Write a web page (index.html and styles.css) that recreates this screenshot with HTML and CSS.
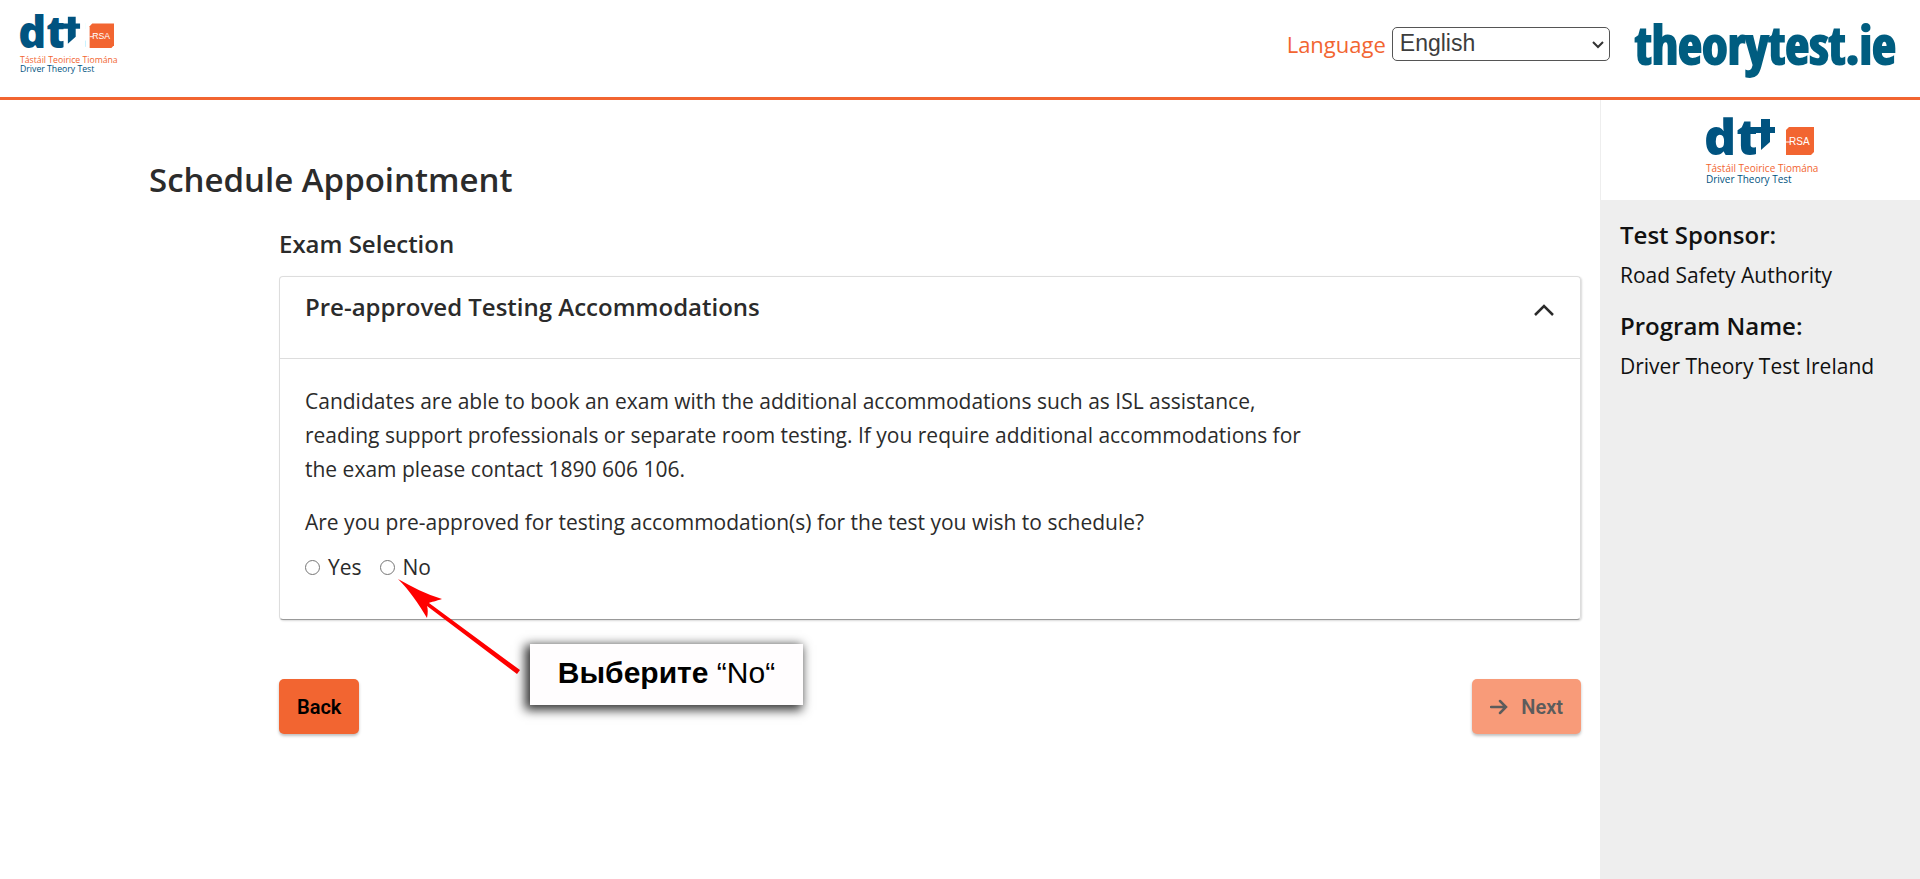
FILE: index.html
```html
<!DOCTYPE html>
<html lang="en">
<head>
<meta charset="utf-8">
<title>Schedule Appointment</title>
<link rel="stylesheet" href="styles.css">
</head>
<body>
<svg class="defs" aria-hidden="true">
  <symbol id="dtt-logo" viewBox="0 0 108 70" overflow="visible">
    <text class="logo-dtt" x="-2" y="39">dtt</text>
    <path fill="#fff" d="M50 0h25v41H50z"/>
    <path fill="#005380" d="M49 11h6V3h9v8h5v6h-5v9l-9 8V17h-6z"/>
    <path fill="#f26531" d="M83 11h25v25l-3 3H80V14z"/>
    <path stroke="#fff" stroke-width="1" d="M80 26h4"/>
    <text class="logo-rsa" x="83" y="29">RSA</text>
    <text class="logo-irish" x="0" y="56">Tástáil Teoirice Tiomána</text>
    <text class="logo-english" x="0" y="67">Driver Theory Test</text>
  </symbol>
</svg>
<header class="topbar">
  <svg class="logo-small" role="img" aria-label="Driver Theory Test"><use href="#dtt-logo"/></svg>
  <div class="topbar-end">
    <label class="language-label" for="language">Language</label>
    <div class="select-wrap">
      <select id="language" class="language"><option>English</option><option>Gaeilge</option></select>
      <svg class="select-arrow" viewBox="0 0 12 8"><path d="M1 1l5 5 5-5"/></svg>
    </div>
    <a class="wordmark" href="#">theorytest.ie</a>
  </div>
</header>
<div class="page">
  <main class="main">
    <h1 class="title">Schedule Appointment</h1>
    <div class="content">
      <h2 class="subtitle">Exam Selection</h2>
      <section class="card">
        <div class="card-head">
          <h3 class="card-title">Pre-approved Testing Accommodations</h3>
          <button class="toggle" type="button" aria-label="Collapse"><svg viewBox="0 0 20 12"><path d="M1 11l9-9 9 9"/></svg></button>
        </div>
        <div class="card-body">
          <p class="text">Candidates are able to book an exam with the additional accommodations such as ISL assistance, reading support professionals or separate room testing. If you require additional accommodations for the exam please contact 1890 606 106.</p>
          <p class="text">Are you pre-approved for testing accommodation(s) for the test you wish to schedule?</p>
          <div class="options">
            <label class="option"><input class="radio" type="radio" name="approved">Yes</label>
            <label class="option"><input class="radio" type="radio" name="approved">No</label>
          </div>
        </div>
        <div class="annotation">
          <svg class="arrow" viewBox="0 0 122 96"><path d="M0 0C14 8 28 15 44 20C38 22 33 23 31 24L122 91L119 95L29 27C30 30 30 34 29 39C20 24 12 12 0 0z"/></svg>
          <div class="callout"><strong>Выберите</strong> “No“</div>
        </div>
      </section>
      <div class="actions">
        <button class="btn" type="button">Back</button>
        <button class="btn btn-next" type="button" disabled><svg class="btn-icon" viewBox="0 0 18 16"><path d="M1 8h15M10 2l6 6-6 6"/></svg>Next</button>
      </div>
    </div>
  </main>
  <aside class="sidebar">
    <div class="sidebar-logo"><svg class="logo-large" role="img" aria-label="Driver Theory Test"><use href="#dtt-logo"/></svg></div>
    <dl class="info">
      <dt>Test Sponsor:</dt>
      <dd>Road Safety Authority</dd>
      <dt>Program Name:</dt>
      <dd>Driver Theory Test Ireland</dd>
    </dl>
  </aside>
</div>
</body>
</html>
```

FILE: styles.css
```css
* { box-sizing: border-box; }
body {
  margin: 0;
  min-height: 100vh;
  display: flex;
  flex-direction: column;
  font: 21px/34px "Segoe UI", "Open Sans", "Noto Sans", sans-serif;
  color: #2b2b2b;
  background: #fff;
}
.defs { position: absolute; width: 0; height: 0; }
.logo-dtt { font: 800 50px "Open Sans", sans-serif; fill: #005380; }
.logo-rsa { font: 10px "Liberation Sans", sans-serif; fill: #fff; }
.logo-irish { font: 10px "Open Sans", sans-serif; fill: #f26531; }
.logo-english { font: 10px "Open Sans", sans-serif; fill: #005380; }

.topbar {
  display: flex;
  justify-content: space-between;
  align-items: flex-start;
  height: 100px;
  padding: 14px 24px 0 20px;
  border-bottom: 3px solid #f26531;
}
.logo-small, .logo-large { overflow: visible; }
.logo-small { width: 94px; height: 61px; }
.topbar-end { display: flex; align-items: center; height: 60px; }
.language-label { color: #f26531; margin-right: 6px; font-size: 22px; }
.select-wrap { position: relative; display: flex; }
.language {
  appearance: none;
  width: 218px;
  height: 34px;
  padding: 0 28px 3px 7px;
  border: 1px solid #555;
  border-radius: 5px;
  background: #fff;
  color: #3d3d3d;
  font: 23px "Liberation Sans", Arial, sans-serif;
}
.select-arrow {
  position: absolute;
  right: 6px;
  top: 14px;
  width: 12px;
  height: 8px;
  fill: none;
  stroke: #333;
  stroke-width: 2;
  pointer-events: none;
}
.wordmark {
  margin-left: 25px;
  color: #005d80;
  text-decoration: none;
  font: bold 52px/56px Impact, "Open Sans Condensed", "Noto Sans ExtraCondensed", "Roboto Condensed", "Noto Sans Condensed", "Liberation Sans", sans-serif;
  -webkit-text-stroke: 2px #005d80;
}

.page { flex: 1; display: flex; }
.main { flex: 1; padding: 58px 19px 0 149px; }
.title { margin: 0; font-size: 33px; line-height: 44px; font-weight: 600; }
.content { margin-left: 130px; padding-top: 25px; }
.subtitle { margin: 0 0 15px; font-size: 24px; line-height: 34px; font-weight: 600; }
.card {
  position: relative;
  border: 1px solid #ddd;
  border-bottom-color: #999;
  border-radius: 4px;
  box-shadow: 1px 1px 2px rgba(0, 0, 0, .15);
}
.card-head {
  display: flex;
  justify-content: space-between;
  align-items: flex-start;
  height: 82px;
  padding: 13px 26px 0 25px;
  border-bottom: 1px solid #ddd;
}
.card-title { margin: 0; font-size: 24px; line-height: 34px; font-weight: 600; }
.toggle { margin: 14px 0 0; padding: 0; border: 0; background: none; display: flex; }
.toggle svg { width: 20px; height: 12px; fill: none; stroke: #2b2b2b; stroke-width: 2.5; }
.card-body { padding: 25px 25px 35px; }
.text { margin: 0 0 19px; max-width: 1030px; }
.options { display: flex; gap: 18px; margin-top: -8px; }
.option { display: flex; align-items: center; gap: 8px; }
.radio { width: 15px; height: 15px; margin: 0; }

.annotation { position: absolute; left: 118px; top: 302px; display: flex; align-items: flex-start; }
.arrow { width: 122px; height: 96px; fill: #f00; }
.callout {
  margin: 65px 0 0 10px;
  width: 273px;
  height: 61px;
  background: #fffdfe;
  color: #000;
  text-align: center;
  font: 30px/58px "Liberation Sans", Arial, sans-serif;
  box-shadow: -3px 3px 10px 2px rgba(0, 0, 0, .8);
}

.actions { display: flex; justify-content: space-between; margin-top: 59px; }
.btn {
  display: flex;
  align-items: center;
  gap: 13px;
  height: 55px;
  padding: 0 18px;
  border: 0;
  border-radius: 5px;
  background: #f26531;
  color: #000;
  font: 600 20px Roboto, sans-serif;
  box-shadow: 0 2px 3px rgba(0, 0, 0, .25);
}
.btn-next { background: #f89b79; color: #5c5c5c; }
.btn-icon { width: 18px; height: 16px; fill: none; stroke: #5c5c5c; stroke-width: 2.5; stroke-linecap: round; }

.sidebar { width: 320px; background: #eee; border-left: 1px solid #eee; }
.sidebar-logo { display: flex; justify-content: center; height: 100px; padding: 16px 2px 0 0; background: #fff; }
.logo-large { width: 108px; height: 70px; }
.info { margin: 0; padding: 16px 19px; color: #111; }
.info dt { font-size: 24px; font-weight: 600; line-height: 38px; }
.info dd { margin: 0 0 11px; line-height: 42px; }
```
